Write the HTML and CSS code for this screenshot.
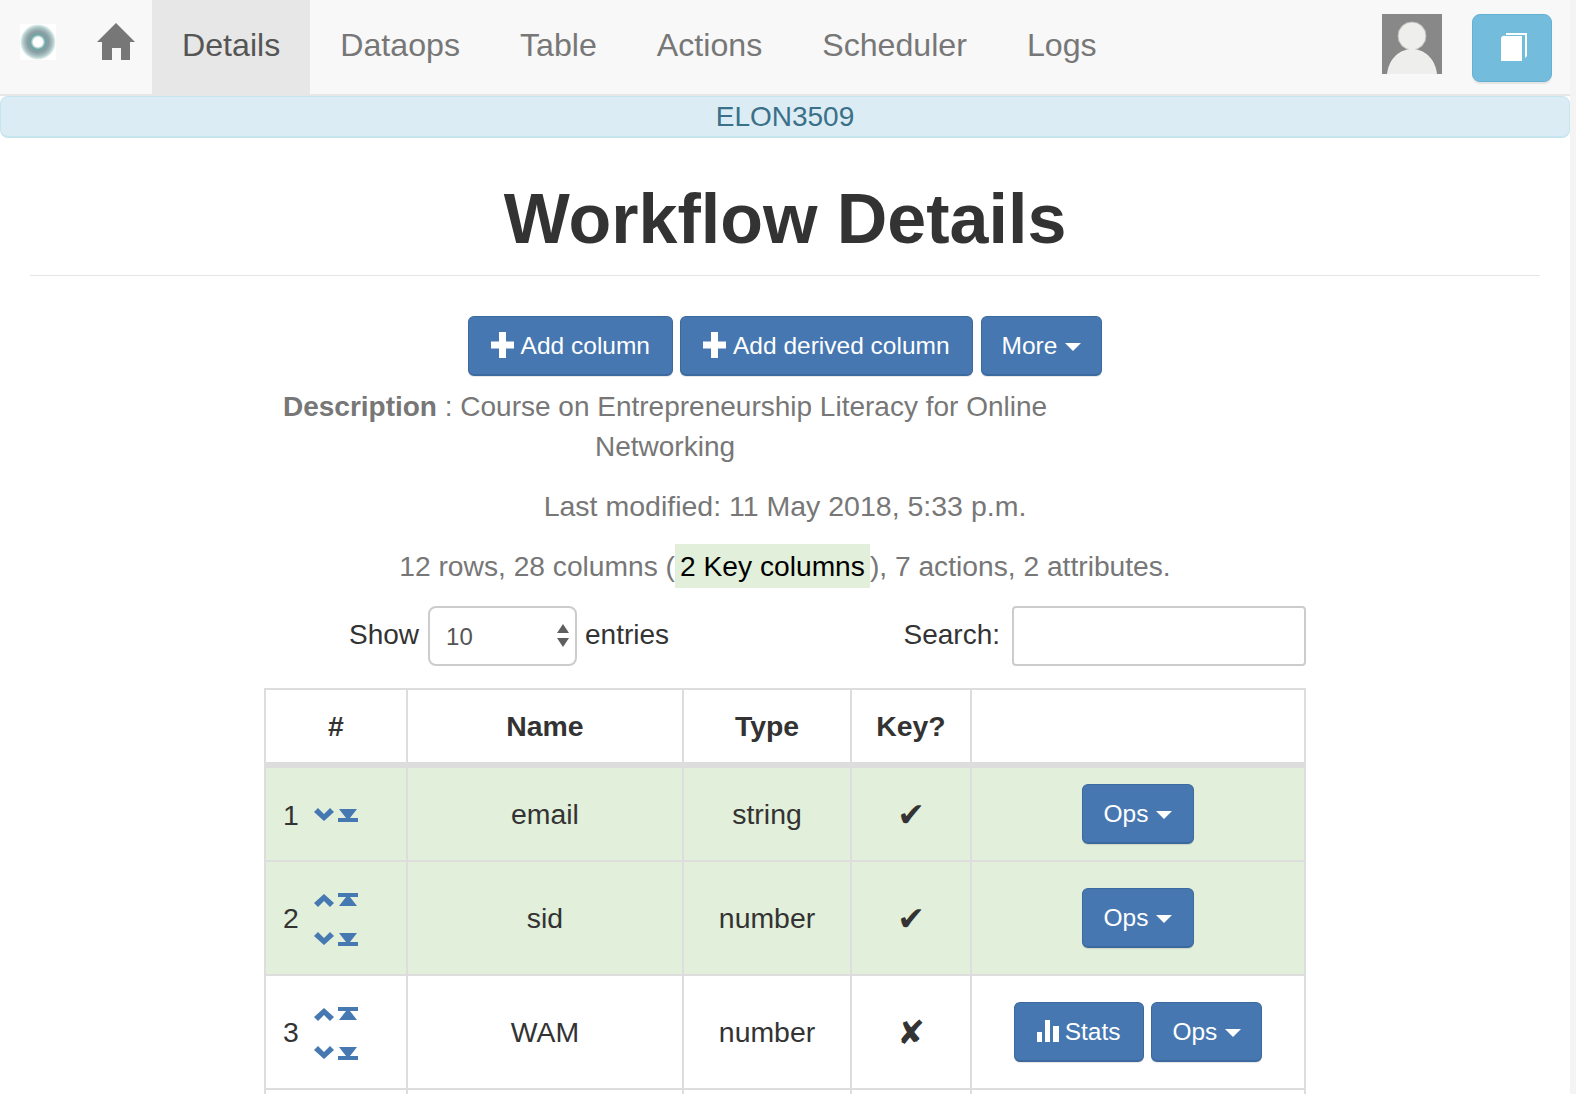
FILE: index.html
```html
<!DOCTYPE html>
<html lang="en">
<head>
    <meta charset="UTF-8">
    <meta name="viewport" content="width=device-width, initial-scale=1.0">
    <title>Workflow Details</title>
    <link rel="stylesheet" href="styles.css">
</head>
<body>
<div class="page">

    <!-- Top navigation -->
    <nav class="navbar">
        <svg class="logo" viewBox="0 0 36 36" width="36" height="36">
            <defs>
                <radialGradient id="logoRing">
                    <stop offset="0.26" stop-color="#ffffff"/>
                    <stop offset="0.42" stop-color="#6fa5a6"/>
                    <stop offset="0.62" stop-color="#8f9ea3"/>
                    <stop offset="0.82" stop-color="#a8c4c4"/>
                    <stop offset="1" stop-color="#e4f1ef"/>
                </radialGradient>
            </defs>
            <rect width="36" height="36" fill="#ffffff"/>
            <circle cx="18" cy="18" r="17.5" fill="url(#logoRing)"/>
        </svg>
        <a class="home-link" href="#">
            <svg viewBox="0 0 38 38" width="38" height="38">
                <path d="M19 0 L38 19 L33 19 L33 37 L24 37 L24 25 L15 25 L15 37 L5 37 L5 19 L0 19 Z" fill="#777777"/>
            </svg>
        </a>
        <a class="nav-item active" href="#">Details</a>
        <a class="nav-item" href="#">Dataops</a>
        <a class="nav-item" href="#">Table</a>
        <a class="nav-item" href="#">Actions</a>
        <a class="nav-item" href="#">Scheduler</a>
        <a class="nav-item" href="#">Logs</a>
        <div class="nav-right">
            <svg class="avatar" viewBox="0 0 60 60" width="60" height="60">
                <rect width="60" height="60" fill="#888888"/>
                <circle cx="30" cy="22" r="14" fill="#eeeeec" stroke="#bdbdbb" stroke-width="1"/>
                <path d="M5 60 C7 44 18 35 30 35 C42 35 53 44 55 60 Z" fill="#eeeeec"/>
            </svg>
            <button class="btn-book" type="button">
                <svg viewBox="0 0 26 28" width="26" height="28">
                    <path d="M5 0 L26 0 L26 23 L24 25 L24 2 L5 2 Z" fill="#ffffff"/>
                    <path d="M0 6 Q0 2 5 3 L21 3 L21 28 L0 28 Z" fill="#ffffff"/>
                </svg>
            </button>
        </div>
    </nav>

    <div class="alert">ELON3509</div>

    <h1 class="title">Workflow Details</h1>

    <div class="actions">
        <button class="btn btn-add" type="button"><svg class="icon-plus" viewBox="0 0 23 26" width="23" height="26"><path d="M8 0 H15 V9.5 H23 V16.5 H15 V26 H8 V16.5 H0 V9.5 H8 Z" fill="#fff"/></svg>Add column</button>
        <button class="btn btn-add" type="button"><svg class="icon-plus" viewBox="0 0 23 26" width="23" height="26"><path d="M8 0 H15 V9.5 H23 V16.5 H15 V26 H8 V16.5 H0 V9.5 H8 Z" fill="#fff"/></svg>Add derived column</button>
        <button class="btn btn-more" type="button">More<span class="caret"></span></button>
    </div>

    <p class="description"><b>Description</b> : Course on Entrepreneurship Literacy for Online Networking</p>
    <p class="info modified">Last modified: 11 May 2018, 5:33 p.m.</p>
    <p class="info">12 rows, 28 columns (<span class="key-note">2 Key columns</span>), 7 actions, 2 attributes.</p>

    <!-- Table controls -->
    <div class="table-controls">
        <div class="length">
            <span>Show</span>
            <div class="fake-select">10
                <svg class="updown" viewBox="0 0 12 24" width="12" height="24">
                    <path d="M6 0 L12 9 L0 9 Z M0 14 L12 14 L6 23 Z" fill="#5f5f5f"/>
                </svg>
            </div>
            <span>entries</span>
        </div>
        <div class="search">
            <span>Search:</span>
            <div class="fake-input"></div>
        </div>
    </div>

    <table class="columns">
        <thead>
            <tr>
                <th class="col-num">#</th>
                <th class="col-name">Name</th>
                <th class="col-type">Type</th>
                <th class="col-key">Key?</th>
                <th class="col-ops"></th>
            </tr>
        </thead>
        <tbody>
            <tr class="key-row row-first">
                <td class="num">
                    <span class="num-value">1</span>
                    <span class="movers">
                        <span class="mover-line">
                            <svg class="mv" viewBox="0 0 20 14" width="20" height="14"><path d="M0 5 L4 1 L10 7 L16 1 L20 5 L10 14 Z" fill="#4679b2"/></svg>
                            <svg class="mv mv-bottom" viewBox="0 0 20 14" width="20" height="14"><path d="M1 0 H19 L12 9 H8 Z M0 9 H20 V13 H0 Z" fill="#4679b2"/></svg>
                        </span>
                    </span>
                </td>
                <td>email</td>
                <td>string</td>
                <td class="mark">&#10004;</td>
                <td><button class="btn" type="button">Ops<span class="caret"></span></button></td>
            </tr>
            <tr class="key-row">
                <td class="num">
                    <span class="num-value">2</span>
                    <span class="movers movers-two">
                        <span class="mover-line">
                            <svg class="mv" viewBox="0 0 20 14" width="20" height="14"><path d="M0 9 L4 13 L10 7 L16 13 L20 9 L10 0 Z" fill="#4679b2"/></svg>
                            <svg class="mv mv-top" viewBox="0 0 20 14" width="20" height="14"><path d="M0 0 H20 V4 H0 Z M8 4 H12 L19 13 H1 Z" fill="#4679b2"/></svg>
                        </span>
                        <span class="mover-line">
                            <svg class="mv" viewBox="0 0 20 14" width="20" height="14"><path d="M0 5 L4 1 L10 7 L16 1 L20 5 L10 14 Z" fill="#4679b2"/></svg>
                            <svg class="mv mv-bottom" viewBox="0 0 20 14" width="20" height="14"><path d="M1 0 H19 L12 9 H8 Z M0 9 H20 V13 H0 Z" fill="#4679b2"/></svg>
                        </span>
                    </span>
                </td>
                <td>sid</td>
                <td>number</td>
                <td class="mark">&#10004;</td>
                <td><button class="btn" type="button">Ops<span class="caret"></span></button></td>
            </tr>
            <tr>
                <td class="num">
                    <span class="num-value">3</span>
                    <span class="movers movers-two">
                        <span class="mover-line">
                            <svg class="mv" viewBox="0 0 20 14" width="20" height="14"><path d="M0 9 L4 13 L10 7 L16 13 L20 9 L10 0 Z" fill="#4679b2"/></svg>
                            <svg class="mv mv-top" viewBox="0 0 20 14" width="20" height="14"><path d="M0 0 H20 V4 H0 Z M8 4 H12 L19 13 H1 Z" fill="#4679b2"/></svg>
                        </span>
                        <span class="mover-line">
                            <svg class="mv" viewBox="0 0 20 14" width="20" height="14"><path d="M0 5 L4 1 L10 7 L16 1 L20 5 L10 14 Z" fill="#4679b2"/></svg>
                            <svg class="mv mv-bottom" viewBox="0 0 20 14" width="20" height="14"><path d="M1 0 H19 L12 9 H8 Z M0 9 H20 V13 H0 Z" fill="#4679b2"/></svg>
                        </span>
                    </span>
                </td>
                <td>WAM</td>
                <td>number</td>
                <td class="mark">&#10008;</td>
                <td>
                    <button class="btn btn-stats" type="button"><svg class="icon-bars" viewBox="0 0 22 22" width="22" height="22"><path d="M0 12 H5 V22 H0 Z M8 0 H13 V22 H8 Z M16 6 H22 V22 H16 Z" fill="#fff"/></svg>Stats</button>
                    <button class="btn btn-ops" type="button">Ops<span class="caret"></span></button>
                </td>
            </tr>
            <tr class="row-cut">
                <td></td><td></td><td></td><td></td><td></td>
            </tr>
        </tbody>
    </table>
</div>
</body>
</html>
```

FILE: styles.css
```css
/* General Styles */
html, body {
    margin: 0;
    padding: 0;
    height: 1094px;
    overflow: hidden;
    background-color: #f4f4f4;
}
body {
    font-family: 'Liberation Sans', Arial, sans-serif;
    font-size: 28px;
    color: #333;
}
.page {
    width: 1570px;
    height: 1094px;
    background-color: white;
    overflow: hidden;
}

/* Navbar */
.navbar {
    display: flex;
    align-items: stretch;
    height: 94px;
    background-color: #f8f8f8;
    border-bottom: 2px solid #e7e7e7;
}
.logo {
    margin: 24px 0 0 20px;
}
.home-link {
    display: block;
    margin: 23px 0 0 41px;
    width: 55px;
}
.nav-item {
    display: flex;
    align-items: center;
    padding: 0 30px 4px;
    font-size: 32.15px;
    color: #777;
    text-decoration: none;
}
.nav-item.active {
    background-color: #e7e7e7;
    color: #555;
}
.nav-right {
    display: flex;
    margin-left: auto;
    padding: 14px 18px 0 0;
}
.avatar {
    margin-right: 30px;
}
.btn-book {
    width: 80px;
    height: 68px;
    padding: 0 0 0 3px;
    background-color: #74bcdb;
    border: 1px solid #63b2d4;
    border-radius: 8px;
    box-shadow: 0 2px 1px rgba(0, 0, 0, 0.08);
}

/* Alert bar */
.alert {
    height: 39px;
    line-height: 39px;
    text-align: center;
    font-size: 28px;
    color: #3a7088;
    background-color: #dcecf4;
    border: 1px solid #c7e5ef;
    border-bottom-width: 2px;
    border-radius: 8px;
}

/* Heading */
.title {
    margin: 0 30px;
    padding: 41px 0 15px;
    height: 81px;
    line-height: 81px;
    text-align: center;
    font-size: 70px;
    font-weight: bold;
    color: #333;
    border-bottom: 1px solid #e6e6e6;
}

/* Buttons */
.actions {
    display: flex;
    justify-content: center;
    gap: 7px;
    margin-top: 40px;
}
.btn {
    height: 60px;
    padding: 0 21px;
    font-family: inherit;
    font-size: 24.5px;
    color: white;
    background-color: #4677b0;
    border: 1px solid #3c6a9f;
    border-bottom-width: 2px;
    border-radius: 6px;
    box-shadow: 0 1px 1px rgba(0, 0, 0, 0.1);
    vertical-align: middle;
}
.btn-add {
    padding: 0 22px;
}
.btn-more {
    margin-left: 1px;
    padding: 0 20px;
}
.icon-plus {
    margin-right: 7px;
    vertical-align: -4px;
}
.icon-bars {
    margin-right: 6px;
    vertical-align: -2px;
}
.caret {
    display: inline-block;
    margin-left: 8px;
    vertical-align: middle;
    border-top: 8px solid white;
    border-left: 8px solid transparent;
    border-right: 8px solid transparent;
}

/* Summary text */
.description {
    width: 800px;
    margin: 11px 0 0 265px;
    line-height: 40px;
    text-align: center;
    color: #777;
}
.info {
    margin: 20px 0 0;
    line-height: 40px;
    text-align: center;
    font-size: 28.2px;
    color: #777;
}
.modified {
    margin-top: 19px;
    font-size: 28.5px;
}
.key-note {
    padding: 6px 5px;
    color: black;
    background-color: #e2efda;
}

/* Table controls */
.table-controls {
    display: flex;
    justify-content: space-between;
    margin: 20px 264px 0 349px;
    height: 60px;
}
.length, .search {
    display: flex;
    align-items: center;
    padding-bottom: 2px;
}
.fake-select {
    position: relative;
    box-sizing: border-box;
    width: 149px;
    height: 60px;
    margin: 2px 8px 0 9px;
    padding-left: 16px;
    line-height: 58px;
    font-size: 24px;
    color: #555;
    border: 2px solid #ccc;
    border-radius: 8px;
}
.updown {
    position: absolute;
    top: 16px;
    right: 6px;
}
.fake-input {
    box-sizing: border-box;
    width: 294px;
    height: 60px;
    margin: 2px 0 0 12px;
    border: 2px solid #ccc;
    border-radius: 4px;
}

/* Table */
.columns {
    width: 1042px;
    margin: 22px 0 0 264px;
    table-layout: fixed;
    border-collapse: collapse;
    font-size: 28.4px;
}
.columns th, .columns td {
    padding: 0;
    border: 2px solid #ddd;
    text-align: center;
    vertical-align: middle;
}
.columns th {
    height: 72px;
    font-weight: bold;
    border-bottom-width: 6px;
}
.col-num { width: 140px; }
.col-name { width: 274px; }
.col-type { width: 166px; }
.col-key { width: 118px; }
.key-row {
    background-color: #e2efda;
}
.columns tbody tr td {
    height: 112px;
}
.columns tbody tr.row-first td {
    height: 92px;
}
.columns .num {
    text-align: left;
    padding-left: 17px;
}
.num-value {
    display: inline-block;
    width: 23px;
    vertical-align: middle;
}
.movers {
    display: inline-flex;
    flex-direction: column;
    vertical-align: middle;
}
.movers-two {
    gap: 23px;
    margin-top: 4px;
}
.mover-line {
    display: flex;
    gap: 4px;
}
.mv-bottom {
    margin-top: 2px;
}
.mv-top {
    margin-top: -1px;
}
.mark {
    font-family: 'DejaVu Sans', sans-serif;
    font-size: 33px;
}
.btn-stats {
    padding: 0 22px;
}
.btn-ops {
    padding: 0 20px;
}
```
